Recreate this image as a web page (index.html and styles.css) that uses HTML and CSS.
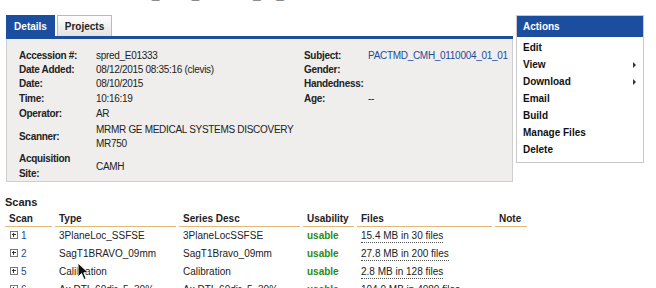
FILE: index.html
```html
<!DOCTYPE html>
<html>

<head>
  <title>MR Session</title>
  <link rel="stylesheet" href="styles.css">
</head>

<body>
  <h1 class="page-title">MR Session: PACTMD_CMH_0110004_01_01</h1>
  <div class="top">
    <div class="details">
      <ul class="tabs">
        <li class="tab active">Details</li>
        <li class="tab">Projects</li>
      </ul>
      <div class="panel">
        <table class="info general">
          <tr><th>Accession #:</th><td>spred_E01333</td></tr>
          <tr><th>Date Added:</th><td>08/12/2015 08:35:16 (clevis)</td></tr>
          <tr><th>Date:</th><td>08/10/2015</td></tr>
          <tr class="tall"><th>Time:</th><td>10:16:19</td></tr>
          <tr class="tall"><th>Operator:</th><td>AR</td></tr>
          <tr class="scanner"><th>Scanner:</th><td>MRMR GE MEDICAL SYSTEMS DISCOVERY MR750</td></tr>
          <tr class="site"><th>Acquisition<br>Site:</th><td>CAMH</td></tr>
        </table>
        <table class="info subject">
          <tr><th>Subject:</th><td><a href="#">PACTMD_CMH_0110004_01_01</a></td></tr>
          <tr><th>Gender:</th><td></td></tr>
          <tr><th>Handedness:</th><td></td></tr>
          <tr><th>Age:</th><td>--</td></tr>
        </table>
      </div>
    </div>
    <div class="actions">
      <div class="actions-head">Actions</div>
      <ul class="menu">
        <li>Edit</li>
        <li class="sub">View</li>
        <li class="sub">Download</li>
        <li>Email</li>
        <li>Build</li>
        <li>Manage Files</li>
        <li>Delete</li>
      </ul>
    </div>
  </div>

  <h2 class="scans-title">Scans</h2>
  <table class="scans">
    <thead>
      <tr>
        <th class="c-scan">Scan</th>
        <th class="c-type">Type</th>
        <th class="c-desc">Series Desc</th>
        <th class="c-use">Usability</th>
        <th class="c-files">Files</th>
        <th class="c-note">Note</th>
      </tr>
    </thead>
    <tbody>
      <tr>
        <td><span class="expand"></span><a href="#">1</a></td>
        <td>3PlaneLoc_SSFSE</td>
        <td>3PlaneLocSSFSE</td>
        <td class="usable">usable</td>
        <td><span class="files">15.4 MB in 30 files</span></td>
        <td></td>
      </tr>
      <tr>
        <td><span class="expand"></span><a href="#">2</a></td>
        <td>SagT1BRAVO_09mm</td>
        <td>SagT1Bravo_09mm</td>
        <td class="usable">usable</td>
        <td><span class="files">27.8 MB in 200 files</span></td>
        <td></td>
      </tr>
      <tr>
        <td><span class="expand"></span><a href="#">5</a></td>
        <td>Calibration</td>
        <td>Calibration</td>
        <td class="usable">usable</td>
        <td><span class="files">2.8 MB in 128 files</span></td>
        <td></td>
      </tr>
      <tr>
        <td><span class="expand"></span><a href="#">6</a></td>
        <td>Ax DTI_60dir_5_30%</td>
        <td>Ax DTI_60dir_5_30%</td>
        <td class="usable">usable</td>
        <td><span class="files">104.0 MB in 4080 files</span></td>
        <td></td>
      </tr>
    </tbody>
  </table>

  <svg class="cursor" width="13" height="19" viewBox="0 0 13 19">
    <path d="M1 1 L1 15 L4.5 11.5 L7 17.5 L9.2 16.6 L6.8 10.8 L11.5 10.8 Z" fill="#111" stroke="#fff" stroke-width="1"/>
  </svg>
</body>

</html>
```

FILE: styles.css
```css
body {
  font-family: "Liberation Sans", Arial, sans-serif;
  font-size: 10px;
  color: #222;
  background-color: white;
  margin: 0;
  padding: 0 5px;
  position: relative;
}

a {
  color: #1a4c9c;
  text-decoration: none;
}

.page-title {
  font-size: 14px;
  margin: -14px 0 0 0;
  height: 29px;
  color: #333;
}

.top {
  display: flex;
  align-items: flex-start;
  gap: 3px;
}

.details {
  width: 507px;
  margin-left: 1px;
}

.tabs {
  list-style: none;
  margin: 0;
  padding: 0;
  display: flex;
  gap: 2px;
  border-bottom: 3px solid #1c4ea0;
}

.tab {
  height: 21px;
  line-height: 21px;
  font-weight: bold;
  color: #222;
  border: 1px solid #bbb;
  border-bottom: none;
  background: linear-gradient(#ffffff, #e2e2e2);
  box-sizing: border-box;
  white-space: nowrap;
  width: 55px;
  text-align: center;
}

.tab.active {
  background: #1c4ea0;
  border-color: #1c4ea0;
  color: white;
  width: 49px;
}

.panel {
  background-color: #efeeec;
  border: 1px solid #cfcfcf;
  border-top: none;
  height: 143px;
  box-sizing: border-box;
  padding: 10px 6px 0 12px;
  display: flex;
  align-items: flex-start;
  letter-spacing: -0.3px;
}

.info {
  border-collapse: collapse;
  table-layout: fixed;
}

.general {
  width: 285px;
}

.subject {
  width: 200px;
}

.info th {
  text-align: left;
  font-weight: bold;
  width: 77px;
  padding: 0;
  line-height: 14px;
  height: 14px;
  vertical-align: middle;
}

.subject th {
  width: 64px;
}

.info td {
  padding: 0;
  line-height: 14px;
  height: 14px;
  vertical-align: middle;
  white-space: nowrap;
}

.info tr.tall th,
.info tr.tall td {
  height: 15px;
}

.subject tr:nth-child(4) th,
.subject tr:nth-child(4) td {
  height: 15px;
}

.info tr.scanner th,
.info tr.scanner td {
  padding-top: 2px;
}

.info tr.scanner td {
  white-space: normal;
  padding-right: 4px;
}

.info tr.site th {
  line-height: 15px;
}

.info tr.site td {
  padding-top: 1px;
}

.actions {
  width: 128px;
  border: 1px solid #c8c8c8;
  box-sizing: border-box;
}

.actions-head {
  background-color: #1c4ea0;
  color: white;
  font-weight: bold;
  height: 21px;
  line-height: 21px;
  padding-left: 6px;
}

.menu {
  list-style: none;
  margin: 0;
  padding: 2px 0 4px 0;
}

.menu li {
  font-weight: bold;
  padding-left: 6px;
  line-height: 17px;
  height: 17px;
  position: relative;
  color: #111;
}

.menu li.sub::after {
  content: "";
  position: absolute;
  right: 7px;
  top: 6px;
  border-left: 3px solid #333;
  border-top: 3px solid transparent;
  border-bottom: 3px solid transparent;
}

.scans-title {
  font-size: 11px;
  margin: 14px 0 4px 0;
  color: #222;
}

.scans {
  border-collapse: separate;
  border-spacing: 3px 0;
  margin-left: -3px;
}

.scans th {
  text-align: left;
  font-weight: bold;
  padding: 0 4px;
  height: 14px;
  line-height: 14px;
  border-bottom: 1px solid #e3b875;
}

.scans td {
  padding: 0 4px;
  height: 18px;
  line-height: 18px;
  white-space: nowrap;
}

.c-scan { width: 39px; }
.c-type { width: 113px; }
.c-desc { width: 113px; }
.c-use { width: 43px; }
.c-files { width: 127px; }
.c-note { width: 24px; }

.expand {
  display: inline-block;
  width: 6px;
  height: 6px;
  border: 1px solid #777;
  margin-right: 3px;
  margin-left: 1px;
  vertical-align: 0;
  position: relative;
  background: white;
}

.expand::before {
  content: "";
  position: absolute;
  left: 1px;
  top: 2px;
  width: 4px;
  height: 1px;
  background: #333;
}

.expand::after {
  content: "";
  position: absolute;
  left: 2px;
  top: 1px;
  width: 1px;
  height: 4px;
  background: #333;
}

.usable {
  color: #2a8a20;
  font-weight: bold;
}

.files {
  border-bottom: 1px dotted #555;
  padding-bottom: 1px;
}

.cursor {
  position: absolute;
  left: 77px;
  top: 262px;
}
```
